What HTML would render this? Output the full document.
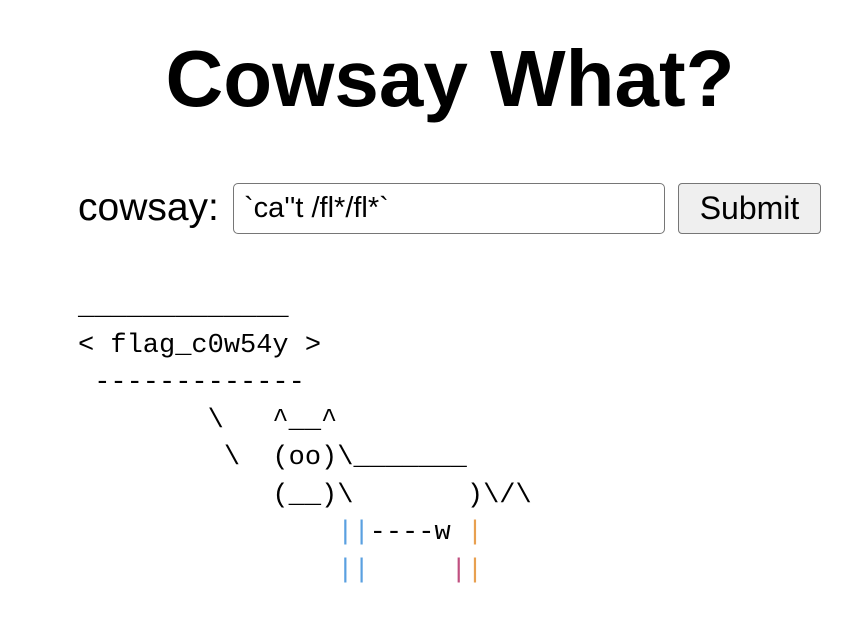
<!DOCTYPE html>
<html><head><meta charset="utf-8"><style>
body{margin:0;background:#fff;width:866px;height:630px;position:relative;overflow:hidden;font-family:"Liberation Sans",sans-serif;color:#000}
h1{position:absolute;left:0;width:900px;text-align:center;top:33px;margin:0;font-size:80px;font-weight:bold;line-height:92px}
.lab{position:absolute;left:78px;top:185px;font-size:39px;line-height:46px}
.inp{position:absolute;left:233px;top:183px;box-sizing:border-box;width:432px;height:51px;border:1.5px solid #767676;border-radius:5px;font-size:29px;line-height:49px;padding-left:10px}
.btn{position:absolute;left:678px;top:183px;width:143px;height:51px;box-sizing:border-box;border:1.5px solid #767676;border-radius:4px;background:#efefef;font-size:32px;line-height:49px;text-align:center}
pre{position:absolute;left:78px;top:290px;margin:0;font-family:"Liberation Mono",monospace;font-size:27px;line-height:37.5px}
.b{color:#5aa0e0}.o{color:#e8a050}.p{color:#c05080}
</style></head><body>
<h1>Cowsay What?</h1>
<div class="lab">cowsay:</div>
<div class="inp">`ca''t /fl*/fl*`</div>
<div class="btn">Submit</div>
<pre>_____________
&lt; flag_c0w54y &gt;
 -------------
        \   ^__^
         \  (oo)\_______
            (__)\       )\/\
                <span class="b">||</span>----w <span class="o">|</span>
                <span class="b">||</span>     <span class="p">|</span><span class="o">|</span></pre>
</body></html>
